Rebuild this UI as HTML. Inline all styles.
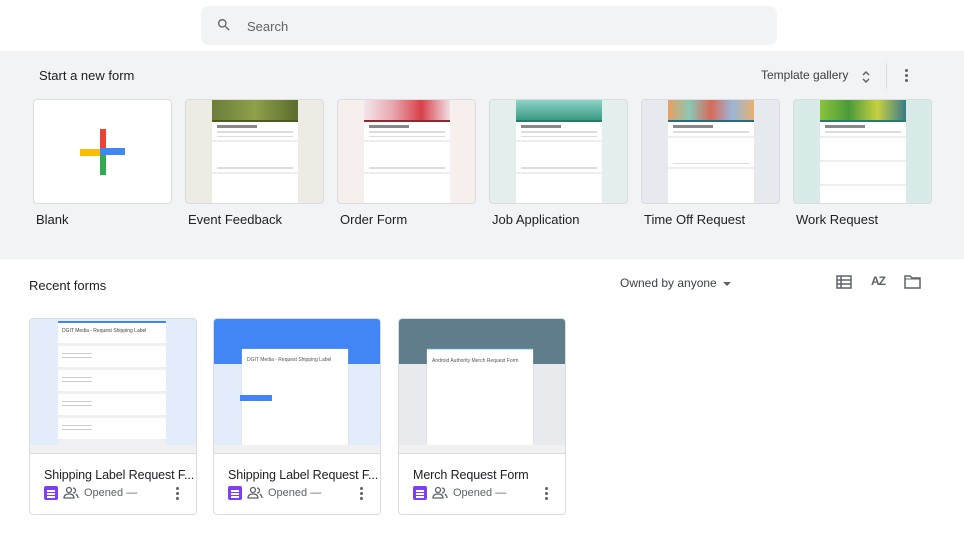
<!DOCTYPE html>
<html><head><meta charset="utf-8"><style>
*{box-sizing:border-box;margin:0;padding:0}
body{width:964px;height:547px;background:#fff;font-family:"Liberation Sans",sans-serif;color:#202124;position:relative;overflow:hidden}
.abs{position:absolute}
.search{left:201px;top:6px;width:576px;height:39px;background:#f1f3f4;border-radius:8px}
.gray{left:0;top:51px;width:964px;height:208px;background:#f1f3f4}
.tc{position:absolute;top:99px;width:139px;height:105px;border:1px solid #dadce0;border-radius:4px;overflow:hidden;background:#fff}
.tl{position:absolute;top:212px;font-size:13px;color:#202124}
.form{position:absolute;top:0;left:26px;width:86px;height:105px;background:#fff}
.hdr{height:22px}
.ln{height:1.5px;background:#ddd;margin:3px 5px}
.sec{height:24px;border-top:2px solid #eee;margin:0}
.rc{position:absolute;top:318px;width:168px;height:197px;border:1px solid #dadce0;border-radius:4px;overflow:hidden;background:#fff}
.th{position:absolute;left:0;top:0;width:100%;height:135px;border-bottom:1px solid #dadce0;overflow:hidden}
.rt{position:absolute;left:14px;top:149px;font-size:12.5px;color:#202124;white-space:nowrap;letter-spacing:-0.1px}
.meta{position:absolute;left:14px;top:167px;font-size:11px;color:#5f6368;display:flex;align-items:center}
.fi{width:14px;height:14px;background:#7e3ff2;border-radius:2px;margin-right:5px;position:relative}
.fi i{position:absolute;left:3px;width:8px;height:1.5px;background:#fff}
.dots{position:absolute;right:17px;top:168px;width:3px}
.dots b{display:block;width:3px;height:3px;border-radius:50%;background:#5f6368;margin-bottom:2px}
.pg{position:absolute;background:#fff;box-shadow:0 0 1px #ccc}
.s{height:21px;background:#fff;margin-top:3px;padding:4px 4px}
.s i{display:block;height:1px;width:30px;background:#ccc;margin-top:3px}
</style></head><body>
<div class="abs search"></div>
<svg class="abs" style="left:216px;top:17px" width="16" height="16" viewBox="0 0 24 24"><path d="M15.5 14h-.8l-.3-.3A6.5 6.5 0 1 0 9.5 16a6.5 6.5 0 0 0 4.2-1.6l.3.3v.8l5 5 1.5-1.5-5-5zm-6 0A4.5 4.5 0 1 1 14 9.5 4.5 4.5 0 0 1 9.5 14z" fill="#5f6368"/></svg>
<div class="abs" style="left:247px;top:19px;font-size:13px;color:#5f6368">Search</div>
<div class="abs gray"></div>
<div class="abs" style="left:39px;top:68px;font-size:13px">Start a new form</div>
<div class="abs" style="left:761px;top:68px;font-size:12px;color:#3c4043">Template gallery</div>
<svg class="abs" style="left:860px;top:69px" width="12" height="16" viewBox="0 0 12 16"><path d="M3 6l3-3 3 3M3 10l3 3 3-3" stroke="#5f6368" stroke-width="1.5" fill="none"/></svg>
<div class="abs" style="left:886px;top:63px;width:1px;height:26px;background:#dadce0"></div>
<div class="abs" style="left:905px;top:69px;width:3px"><div style="width:3px;height:3px;border-radius:50%;background:#5f6368;margin-bottom:2px"></div><div style="width:3px;height:3px;border-radius:50%;background:#5f6368;margin-bottom:2px"></div><div style="width:3px;height:3px;border-radius:50%;background:#5f6368"></div></div>

<div class="tc" style="left:33px">
<div class="abs" style="left:66px;top:29px;width:6px;height:26px;background:#ea4335"></div>
<div class="abs" style="left:66px;top:55px;width:6px;height:20px;background:#34a853"></div>
<div class="abs" style="left:46px;top:49px;width:20px;height:7px;background:#fbbc04"></div>
<div class="abs" style="left:66px;top:48px;width:25px;height:7px;background:#4285f4"></div>
</div>
<div class="tl" style="left:36px">Blank</div>

<div class="tc" style="left:185px;background:#ecebe4"><div class="form"><div class="hdr" style="background:linear-gradient(90deg,#6b7d3a,#8fa04a,#5a6b2e);border-bottom:2px solid #4d5a24"></div><div class="ln" style="width:40px;height:3px;background:#888"></div><div class="ln"></div><div class="ln"></div><div class="sec"></div><div class="ln"></div><div class="sec"></div></div></div>
<div class="tl" style="left:188px">Event Feedback</div>

<div class="tc" style="left:337px;background:#f6efee"><div class="form"><div class="hdr" style="background:linear-gradient(90deg,#f2e6ea,#e8a8b0,#d9404a,#f0e0e4);border-bottom:2px solid #8b2a32"></div><div class="ln" style="width:40px;height:3px;background:#888"></div><div class="ln"></div><div class="ln"></div><div class="sec"></div><div class="ln"></div><div class="sec"></div></div></div>
<div class="tl" style="left:340px">Order Form</div>

<div class="tc" style="left:489px;background:#e4eeec"><div class="form"><div class="hdr" style="background:linear-gradient(180deg,#8fd3c6,#3a9a84);border-bottom:2px solid #2a7a6a"></div><div class="ln" style="width:40px;height:3px;background:#888"></div><div class="ln"></div><div class="ln"></div><div class="sec"></div><div class="ln"></div><div class="sec"></div></div></div>
<div class="tl" style="left:492px">Job Application</div>

<div class="tc" style="left:641px;background:#e6eaee"><div class="form"><div class="hdr" style="background:linear-gradient(90deg,#e9a060,#8bc7b5,#d86a5a,#9ab7d8,#e8b070);border-bottom:2px solid #2a6a7a"></div><div class="ln" style="width:40px;height:3px;background:#888"></div><div class="ln"></div><div class="sec"></div><div class="ln"></div><div class="sec"></div></div></div>
<div class="tl" style="left:644px">Time Off Request</div>

<div class="tc" style="left:793px;background:#d8ebe8"><div class="form"><div class="hdr" style="background:linear-gradient(90deg,#8ac43a,#4a9a3a,#c8d040,#3a7a8a);border-bottom:2px solid #2a7a6a"></div><div class="ln" style="width:40px;height:3px;background:#888"></div><div class="ln"></div><div class="sec"></div><div class="sec"></div><div class="sec"></div></div></div>
<div class="tl" style="left:796px">Work Request</div>

<div class="abs" style="left:29px;top:278px;font-size:13px">Recent forms</div>
<div class="abs" style="left:620px;top:276px;font-size:12px;color:#3c4043">Owned by anyone</div>
<div class="abs" style="left:723px;top:282px;width:0;height:0;border-left:4px solid transparent;border-right:4px solid transparent;border-top:4px solid #5f6368"></div>
<svg class="abs" style="left:836px;top:275px" width="16" height="14" viewBox="0 0 16 14"><rect x="1" y="1" width="14" height="12" fill="none" stroke="#5f6368" stroke-width="1.5"/><path d="M1 5h14M1 9h14M5 1v12" stroke="#5f6368" stroke-width="1.5"/></svg>
<div class="abs" style="left:871px;top:274px;font-size:12px;color:#5f6368;font-weight:bold;letter-spacing:-1px">AZ</div>
<svg class="abs" style="left:904px;top:275px" width="17" height="14" viewBox="0 0 17 14"><path d="M1 1h5l2 2h8v10H1z" fill="none" stroke="#5f6368" stroke-width="1.5"/><path d="M1 4h15" stroke="#5f6368" stroke-width="1"/></svg>

<div class="rc" style="left:29px"><div class="th" style="background:#e3ecfb"><div class="pg" style="left:28px;top:2px;width:108px;height:125px;background:#eef0f3;box-shadow:none"><div style="height:22px;background:#fff;border-top:2px solid #4285f4;font-size:5px;padding:5px 4px;color:#444">DGIT Media - Request Shipping Label</div><div class="s"><i></i><i></i></div><div class="s"><i></i><i></i></div><div class="s"><i></i><i></i></div><div class="s"><i></i><i></i></div></div><div class="abs" style="left:0;top:126px;width:100%;height:10px;background:#f1f1f1"></div></div>
<div class="rt">Shipping Label Request F...</div>
<div class="meta"><div class="fi"><i style="top:4px"></i><i style="top:7px"></i><i style="top:10px"></i></div><svg width="16" height="14" viewBox="0 0 16 14" style="margin-right:5px"><circle cx="6" cy="4" r="2.5" fill="none" stroke="#5f6368" stroke-width="1.3"/><path d="M1 12c0-3 2-4 5-4s5 1 5 4z" fill="none" stroke="#5f6368" stroke-width="1.3"/><path d="M10 2a2.5 2.5 0 0 1 0 5M13 8c1 1 2 2 2 4" fill="none" stroke="#5f6368" stroke-width="1.3"/></svg>Opened —</div>
<div class="dots"><b></b><b></b><b></b></div></div>

<div class="rc" style="left:213px"><div class="th" style="background:#e3ecfb"><div class="abs" style="left:0;top:0;width:100%;height:45px;background:#4285f4"></div><div class="pg" style="left:28px;top:30px;width:106px;height:105px;font-size:5px;padding:8px 5px;color:#555">DGIT Media - Request Shipping Label<div class="abs" style="left:-2px;top:46px;width:32px;height:6px;background:#4285f4"></div></div><div class="abs" style="left:0;top:126px;width:100%;height:10px;background:#f1f1f1"></div></div>
<div class="rt">Shipping Label Request F...</div>
<div class="meta"><div class="fi"><i style="top:4px"></i><i style="top:7px"></i><i style="top:10px"></i></div><svg width="16" height="14" viewBox="0 0 16 14" style="margin-right:5px"><circle cx="6" cy="4" r="2.5" fill="none" stroke="#5f6368" stroke-width="1.3"/><path d="M1 12c0-3 2-4 5-4s5 1 5 4z" fill="none" stroke="#5f6368" stroke-width="1.3"/><path d="M10 2a2.5 2.5 0 0 1 0 5M13 8c1 1 2 2 2 4" fill="none" stroke="#5f6368" stroke-width="1.3"/></svg>Opened —</div>
<div class="dots"><b></b><b></b><b></b></div></div>

<div class="rc" style="left:398px"><div class="th" style="background:#e8eaed"><div class="abs" style="left:0;top:0;width:100%;height:45px;background:#607d8b"></div><div class="pg" style="left:28px;top:30px;width:94px;height:105px;font-size:5px;padding:8px 5px;color:#555;border-top:1px solid #b2ebf2;width:106px">Android Authority Merch Request Form</div><div class="abs" style="left:0;top:126px;width:100%;height:10px;background:#f1f1f1"></div></div>
<div class="rt">Merch Request Form</div>
<div class="meta"><div class="fi"><i style="top:4px"></i><i style="top:7px"></i><i style="top:10px"></i></div><svg width="16" height="14" viewBox="0 0 16 14" style="margin-right:5px"><circle cx="6" cy="4" r="2.5" fill="none" stroke="#5f6368" stroke-width="1.3"/><path d="M1 12c0-3 2-4 5-4s5 1 5 4z" fill="none" stroke="#5f6368" stroke-width="1.3"/><path d="M10 2a2.5 2.5 0 0 1 0 5M13 8c1 1 2 2 2 4" fill="none" stroke="#5f6368" stroke-width="1.3"/></svg>Opened —</div>
<div class="dots"><b></b><b></b><b></b></div></div>
</body></html>
